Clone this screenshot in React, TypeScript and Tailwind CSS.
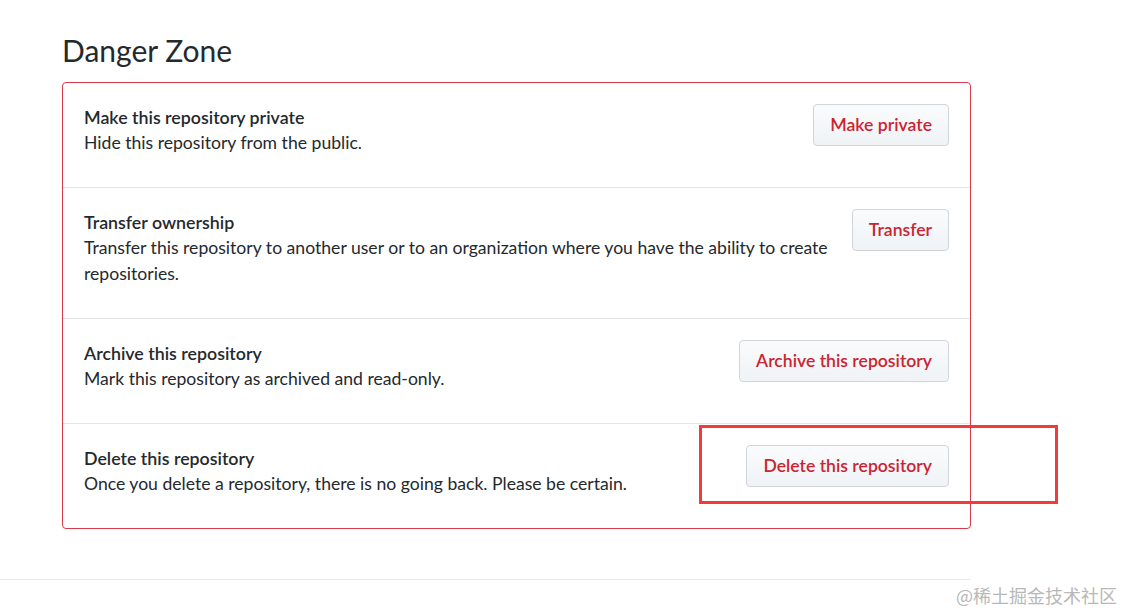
import React from "react";

const rows = [
  {
    title: "Make this repository private",
    desc: "Hide this repository from the public.",
    action: "Make private",
  },
  {
    title: "Transfer ownership",
    desc: "Transfer this repository to another user or to an organization where you have the ability to create repositories.",
    action: "Transfer",
  },
  {
    title: "Archive this repository",
    desc: "Mark this repository as archived and read-only.",
    action: "Archive this repository",
  },
  {
    title: "Delete this repository",
    desc: "Once you delete a repository, there is no going back. Please be certain.",
    action: "Delete this repository",
  },
];

const DangerButton = ({ label }: { label: string }) => (
  <button className="h-[42px] shrink-0 whitespace-nowrap rounded-[4px] border border-[#d1d5da] bg-gradient-to-b from-[#fafbfc] to-[#eff3f6] px-[16px] text-[17.6px] font-semibold text-[#cb2431]">
    {label}
  </button>
);

export default function App() {
  return (
    <div
      className="relative h-[612px] w-[1123px] overflow-hidden bg-white text-[#24292e]"
      style={{ fontFamily: '"Segoe UI", Lato, "Noto Sans", sans-serif' }}
    >
      <div className="ml-[62px] w-[909px] pt-[33px]">
        <h2 className="mb-[14px] text-[30px] font-normal leading-[35px]">Danger Zone</h2>

        {/* Danger box */}
        <div className="rounded-[4px] border border-[#d73a49]">
          {rows.map((row, i) => (
            <div
              key={row.title}
              className={`flex items-start gap-[24px] px-[21px] pt-[21px] pb-[20px] ${
                i > 0 ? "border-t border-[#e1e4e8]" : ""
              }`}
            >
              <div className="flex-1 text-[17.6px] leading-[26px]">
                <div className="text-[17.8px] font-semibold">{row.title}</div>
                <p className="mb-[11px]">{row.desc}</p>
              </div>
              <DangerButton label={row.action} />
            </div>
          ))}
        </div>
      </div>

      {/* footer rule */}
      <div className="mt-[50px] w-[970px] border-t border-[#e8e8e8]" />

      {/* annotation box */}
      <div className="absolute left-[699px] top-[425px] h-[79px] w-[359px] border-[3px] border-[#f23c3c]" />

      {/* watermark */}
      <div
        className="absolute right-[6px] bottom-[6px] text-[18px] leading-[22px] text-[#b8b8b8]"
        style={{ fontFamily: '"Noto Sans CJK SC", sans-serif' }}
      >
        @稀土掘金技术社区
      </div>
    </div>
  );
}
